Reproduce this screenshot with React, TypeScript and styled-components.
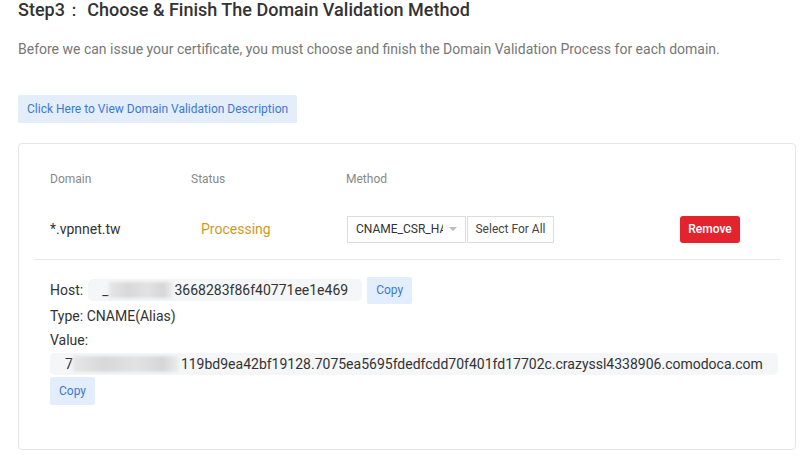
import styled, { createGlobalStyle } from "styled-components";

const GlobalStyle = createGlobalStyle`
  body {
    margin: 0;
    background: #fff;
    font-family: Roboto, "Liberation Sans", sans-serif;
    color: #333;
  }
`;

const Page = styled.div`
  padding: 0 10px 0 18px;
  width: 778px;
`;

const Title = styled.h2`
  margin: 0;
  font-size: 18px;
  font-weight: 500;
  line-height: 20px;
  color: #333;
  white-space: pre;
`;

const Desc = styled.p`
  margin: 19px 0 0;
  font-size: 14px;
  line-height: 20px;
  color: #777;
`;

const LinkButton = styled.button`
  display: block;
  margin-top: 36px;
  height: 28px;
  padding: 0 9px;
  border: none;
  border-radius: 2px;
  background: #e4eefb;
  color: #3a78d8;
  font-family: Roboto, "Liberation Sans", sans-serif;
  font-size: 12px;
`;

const Card = styled.div`
  margin-top: 20px;
  border: 1px solid #e6e6e6;
  border-radius: 4px;
  padding: 15px 15px 46px;
  height: 307px;
  box-sizing: border-box;
`;

const Table = styled.div`
  display: grid;
  grid-template-columns: 141px 155px 1fr auto;
  border-bottom: 1px solid #e8e8e8;
`;

const HeadCell = styled.div`
  height: 40px;
  display: flex;
  align-items: center;
  padding: 0 16px;
  font-size: 12px;
  color: #888;
`;

const Cell = styled.div<{ $pad?: number }>`
  height: 60px;
  display: flex;
  align-items: center;
  padding: 0 ${(p) => p.$pad ?? 16}px;
  font-size: 14px;
  color: #333;
`;

const Status = styled.span`
  margin-left: 10px;
  color: #d09a1f;
`;

const SelectBox = styled.div`
  width: 119px;
  height: 27px;
  box-sizing: border-box;
  border: 1px solid #ddd;
  display: flex;
  align-items: center;
  padding: 0 8px;
  font-size: 12px;
  color: #333;
  gap: 6px;
  span {
    overflow: hidden;
    white-space: nowrap;
    flex: 1;
  }
`;

const Caret = styled.i`
  width: 0;
  height: 0;
  border-left: 4px solid transparent;
  border-right: 4px solid transparent;
  border-top: 4px solid #bbb;
`;

const GhostButton = styled.button`
  height: 27px;
  width: 87px;
  margin-left: 1px;
  border: 1px solid #ddd;
  background: #fff;
  font-family: Roboto, "Liberation Sans", sans-serif;
  font-size: 12px;
  color: #444;
  padding: 0;
`;

const DangerButton = styled.button`
  height: 27px;
  width: 60px;
  border: none;
  border-radius: 3px;
  background: #e3242f;
  color: #fff;
  font-family: Roboto, "Liberation Sans", sans-serif;
  font-size: 12px;
  font-weight: 500;
  margin-right: 24px;
`;

const Details = styled.div`
  padding: 16px 0 0 16px;
  font-size: 14px;
  color: #333;
`;

const Line = styled.div`
  display: flex;
  align-items: center;
  gap: 5px;
  height: 24px;
`;

const HostLine = styled(Line)`
  height: 28px;
`;

const Code = styled.span<{ $full?: boolean }>`
  display: flex;
  align-items: center;
  height: 22px;
  padding: 0 14px;
  background: #f5f6f8;
  border-radius: 5px;
  white-space: nowrap;
  ${(p) => (p.$full ? "width: 728px; box-sizing: border-box; padding: 0 15px; margin-top: 1px;" : "")}
`;

const Blur = styled.span<{ $w: number }>`
  display: inline-block;
  width: ${(p) => p.$w}px;
  margin-right: 2px;
  height: 16px;
  background: linear-gradient(90deg, #e6e6e6, #d8d8d8 30%, #e2e2e2 60%, #d6d6d6 85%, #eeeeee);
  filter: blur(1.5px);
  vertical-align: middle;
`;

const CopyButton = styled.button`
  height: 27px;
  padding: 0 9px;
  border: none;
  border-radius: 2px;
  background: #e3eefc;
  color: #3a78d8;
  font-family: Roboto, "Liberation Sans", sans-serif;
  font-size: 12px;
`;

const BlockCopy = styled(CopyButton)`
  display: block;
  height: 28px;
  margin-top: 2px;
`;

export default function App() {
  return (
    <>
      <GlobalStyle />
      <Page>
        <Title>{"Step3： Choose & Finish The Domain Validation Method"}</Title>
        <Desc>
          Before we can issue your certificate, you must choose and finish the Domain Validation Process for each
          domain.
        </Desc>
        <LinkButton>Click Here to View Domain Validation Description</LinkButton>
        <Card>
          <Table>
            <HeadCell>Domain</HeadCell>
            <HeadCell>Status</HeadCell>
            <HeadCell>Method</HeadCell>
            <HeadCell />
            <Cell>*.vpnnet.tw</Cell>
            <Cell>
              <Status>Processing</Status>
            </Cell>
            <Cell $pad={17}>
              <SelectBox>
                <span>CNAME_CSR_HASH</span>
                <Caret />
              </SelectBox>
              <GhostButton>Select For All</GhostButton>
            </Cell>
            <Cell>
              <DangerButton>Remove</DangerButton>
            </Cell>
          </Table>
          <Details>
            <HostLine>
              Host:
              <Code>
                _<Blur $w={64} />3668283f86f40771ee1e469
              </Code>
              <CopyButton>Copy</CopyButton>
            </HostLine>
            <Line>Type: CNAME(Alias)</Line>
            <Line>Value:</Line>
            <Code $full>
              7<Blur $w={106} />119bd9ea42bf19128.7075ea5695fdedfcdd70f401fd17702c.crazyssl4338906.comodoca.com
            </Code>
            <BlockCopy>Copy</BlockCopy>
          </Details>
        </Card>
      </Page>
    </>
  );
}
